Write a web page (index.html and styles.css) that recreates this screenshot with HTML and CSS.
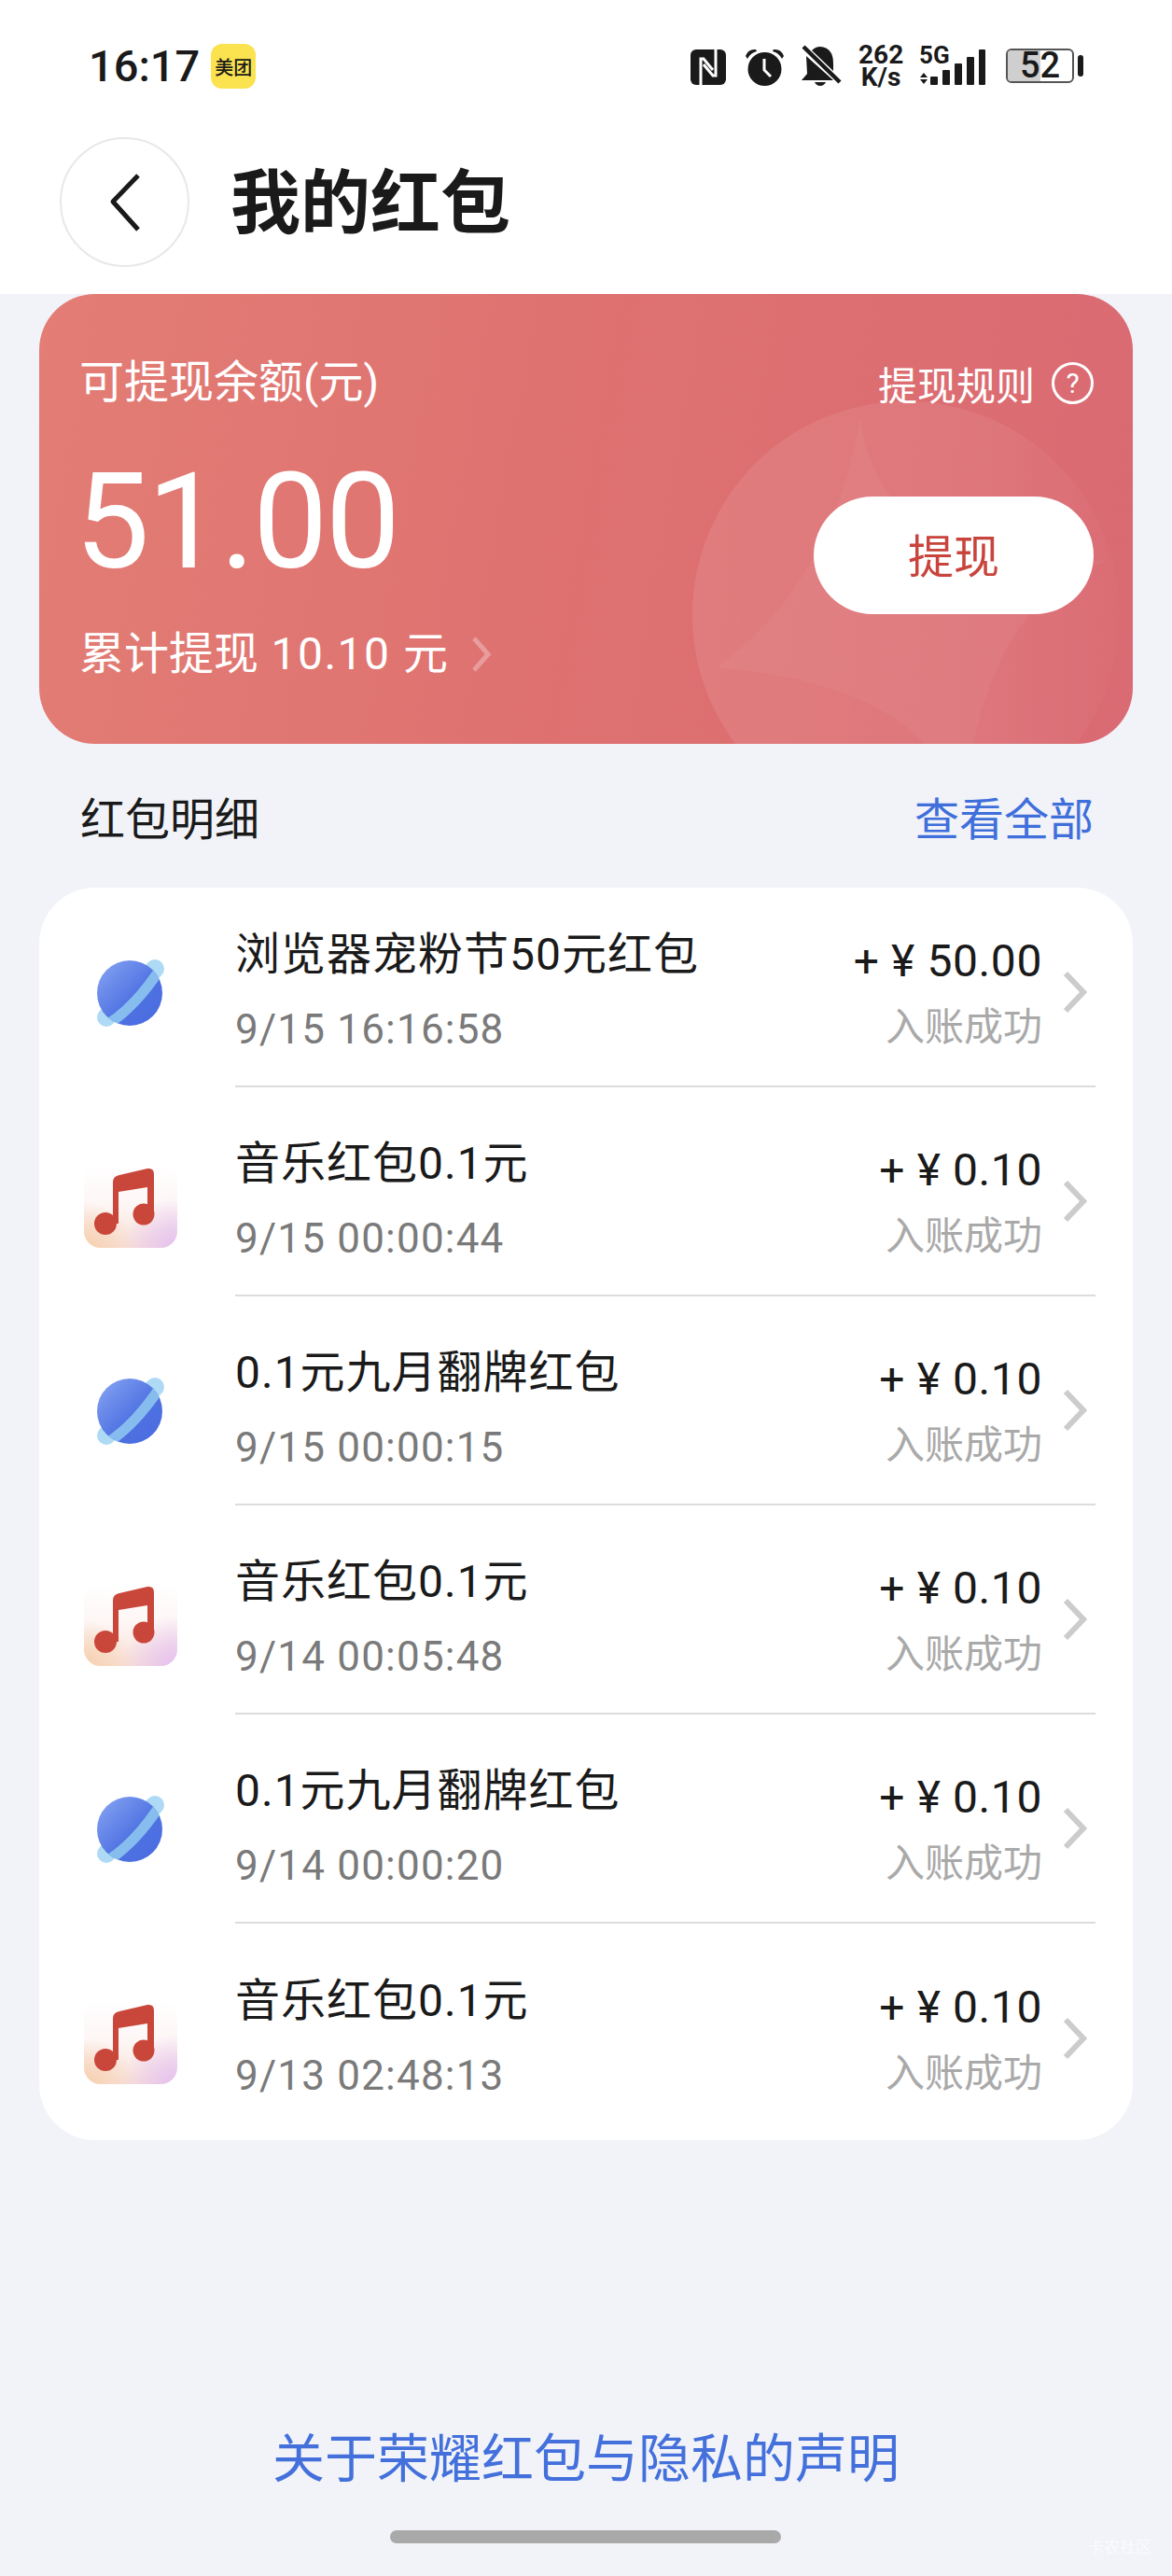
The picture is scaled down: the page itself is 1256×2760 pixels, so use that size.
FILE: index.html
```html
<!DOCTYPE html>
<html>
<head>
    <title>我的红包</title>
    <link rel="stylesheet" href="styles.css">
</head>
<body>
    <div class="page">
        <header class="top">
            <div class="status">
                <div class="status-left">
                    <span class="clock-text">16:17</span>
                    <span class="app-badge">美团</span>
                </div>
                <div class="status-right">
                    <svg class="ic-nfc" width="38" height="38" viewBox="0 0 38 38">
                        <rect width="38" height="38" rx="6" fill="#1a1a1a"/>
                        <path d="M11 38V10h3l10 12M27 0v28h-3L14 16" fill="none" stroke="#fff" stroke-width="3"/>
                    </svg>
                    <svg class="ic-alarm" width="43" height="41" viewBox="0 0 43 41">
                        <circle cx="21.500" cy="23" r="18" fill="#1a1a1a"/>
                        <path d="M1 9Q4 1 12 2L13 4Q7 5 3 12ZM42 9Q39 1 31 2L30 4Q36 5 40 12Z" fill="#1a1a1a"/>
                        <path d="M21 12v12l7 7" fill="none" stroke="#fff" stroke-width="3"/>
                    </svg>
                    <svg class="ic-bell" width="43" height="44" viewBox="0 0 43 44">
                        <path d="M5 12L34 38H0L6 31ZM11 6Q15 2 20 2Q34 3 34 20V28Z" fill="#1a1a1a"/>
                        <path d="M14 40H26Q24 44 20 44Q16 44 14 40Z" fill="#1a1a1a"/>
                        <path d="M2 2L41 40" stroke="#1a1a1a" stroke-width="4.500"/>
                    </svg>
                    <div class="speed">262<br>K/s</div>
                    <div class="net">
                        <span class="net-label">5G</span>
                        <svg class="net-bars" width="71" height="38" viewBox="0 0 71 38">
                            <path d="M1 30l4-5 4 5ZM1 32l4 5 4-5Z" fill="#1a1a1a"/>
                            <rect x="12" y="29" width="8" height="9" rx="1" fill="#1a1a1a"/>
                            <rect x="25" y="22" width="8" height="16" rx="1" fill="#1a1a1a"/>
                            <rect x="38" y="15" width="8" height="23" rx="1" fill="#1a1a1a"/>
                            <rect x="51" y="8" width="8" height="30" rx="1" fill="#1a1a1a"/>
                            <rect x="64" y="0" width="7" height="38" rx="1" fill="#1a1a1a"/>
                        </svg>
                    </div>
                    <div class="battery">
                        <div class="battery-body">
                            <span class="battery-fill"></span>
                            <span class="battery-num">52</span>
                        </div>
                        <span class="battery-nub"></span>
                    </div>
                </div>
            </div>
            <nav class="nav">
                <div class="back">
                    <svg width="34" height="64" viewBox="0 0 34 64">
                        <path d="M31 3L4 31L31 61" fill="none" stroke="#1a1a1a" stroke-width="5" stroke-linejoin="round"/>
                    </svg>
                </div>
                <h1>我的红包</h1>
            </nav>
        </header>

        <section class="balance">
            <svg class="balance-bg" width="1172" height="482" viewBox="0 0 1172 482">
                <defs>
                    <linearGradient id="disc-fade" x1="0" y1="0" x2="1" y2="0">
                        <stop offset="0" stop-color="#fff" stop-opacity="0.09"/>
                        <stop offset="0.7" stop-color="#fff" stop-opacity="0.07"/>
                        <stop offset="1" stop-color="#fff" stop-opacity="0.01"/>
                    </linearGradient>
                </defs>
                <circle cx="929" cy="344" r="229" fill="url(#disc-fade)"/>
                <path d="M880 132Q900 300 1146 285Q1010 330 990 560Q960 420 726 400Q850 310 880 132Z" fill="#fff" fill-opacity="0.04"/>
            </svg>
            <div class="balance-left">
                <div class="balance-label">可提现余额(元)</div>
                <div class="balance-amount">51.00</div>
                <div class="balance-total">
                    <span>累计提现<span class="total-num"> 10.10 </span>元</span>
                    <svg width="22" height="38" viewBox="0 0 22 38">
                        <path d="M3 2L18 19L3 36" fill="none" stroke="#fff" stroke-opacity="0.3" stroke-width="5"/>
                    </svg>
                </div>
            </div>
            <div class="balance-right">
                <div class="rules">
                    <span>提现规则</span>
                    <span class="rules-q">?</span>
                </div>
                <div class="withdraw">提现</div>
            </div>
        </section>

        <div class="section-head">
            <span class="section-title">红包明细</span>
            <span class="section-link">查看全部</span>
        </div>

        <section class="list">
            <div class="row">
                <div class="row-icon">
                    <svg width="72" height="72" viewBox="0 0 72 72"><use href="#planet"/></svg>
                </div>
                <div class="row-main">
                    <div class="row-text">
                        <div class="row-title">浏览器宠粉节50元红包</div>
                        <div class="row-time">9/15 16:16:58</div>
                    </div>
                    <div class="row-money">
                        <div class="row-amount">+ ¥ 50.00</div>
                        <div class="row-state">入账成功</div>
                    </div>
                    <svg class="row-arrow" width="26" height="46" viewBox="0 0 26 46"><path d="M3 3L22 23L3 43" fill="none" stroke="#ccc" stroke-width="6"/></svg>
                </div>
            </div>
            <div class="row">
                <div class="row-icon">
                    <svg class="note" width="100" height="90" viewBox="0 0 100 90"><use href="#music"/></svg>
                </div>
                <div class="row-main">
                    <div class="row-text">
                        <div class="row-title">音乐红包0.1元</div>
                        <div class="row-time">9/15 00:00:44</div>
                    </div>
                    <div class="row-money">
                        <div class="row-amount">+ ¥ 0.10</div>
                        <div class="row-state">入账成功</div>
                    </div>
                    <svg class="row-arrow" width="26" height="46" viewBox="0 0 26 46"><path d="M3 3L22 23L3 43" fill="none" stroke="#ccc" stroke-width="6"/></svg>
                </div>
            </div>
            <div class="row">
                <div class="row-icon">
                    <svg width="72" height="72" viewBox="0 0 72 72"><use href="#planet"/></svg>
                </div>
                <div class="row-main">
                    <div class="row-text">
                        <div class="row-title">0.1元九月翻牌红包</div>
                        <div class="row-time">9/15 00:00:15</div>
                    </div>
                    <div class="row-money">
                        <div class="row-amount">+ ¥ 0.10</div>
                        <div class="row-state">入账成功</div>
                    </div>
                    <svg class="row-arrow" width="26" height="46" viewBox="0 0 26 46"><path d="M3 3L22 23L3 43" fill="none" stroke="#ccc" stroke-width="6"/></svg>
                </div>
            </div>
            <div class="row">
                <div class="row-icon">
                    <svg class="note" width="100" height="90" viewBox="0 0 100 90"><use href="#music"/></svg>
                </div>
                <div class="row-main">
                    <div class="row-text">
                        <div class="row-title">音乐红包0.1元</div>
                        <div class="row-time">9/14 00:05:48</div>
                    </div>
                    <div class="row-money">
                        <div class="row-amount">+ ¥ 0.10</div>
                        <div class="row-state">入账成功</div>
                    </div>
                    <svg class="row-arrow" width="26" height="46" viewBox="0 0 26 46"><path d="M3 3L22 23L3 43" fill="none" stroke="#ccc" stroke-width="6"/></svg>
                </div>
            </div>
            <div class="row">
                <div class="row-icon">
                    <svg width="72" height="72" viewBox="0 0 72 72"><use href="#planet"/></svg>
                </div>
                <div class="row-main">
                    <div class="row-text">
                        <div class="row-title">0.1元九月翻牌红包</div>
                        <div class="row-time">9/14 00:00:20</div>
                    </div>
                    <div class="row-money">
                        <div class="row-amount">+ ¥ 0.10</div>
                        <div class="row-state">入账成功</div>
                    </div>
                    <svg class="row-arrow" width="26" height="46" viewBox="0 0 26 46"><path d="M3 3L22 23L3 43" fill="none" stroke="#ccc" stroke-width="6"/></svg>
                </div>
            </div>
            <div class="row">
                <div class="row-icon">
                    <svg class="note" width="100" height="90" viewBox="0 0 100 90"><use href="#music"/></svg>
                </div>
                <div class="row-main">
                    <div class="row-text">
                        <div class="row-title">音乐红包0.1元</div>
                        <div class="row-time">9/13 02:48:13</div>
                    </div>
                    <div class="row-money">
                        <div class="row-amount">+ ¥ 0.10</div>
                        <div class="row-state">入账成功</div>
                    </div>
                    <svg class="row-arrow" width="26" height="46" viewBox="0 0 26 46"><path d="M3 3L22 23L3 43" fill="none" stroke="#ccc" stroke-width="6"/></svg>
                </div>
            </div>
        </section>

        <div class="privacy">关于荣耀红包与隐私的声明</div>
        <div class="home-bar"></div>
        <div class="watermark">卡农社区</div>
    </div>

    <!-- shared row icons -->
    <svg class="defs" width="0" height="0">
        <defs>
            <linearGradient id="planet-fill" x1="0.1" y1="0.1" x2="0.9" y2="0.9">
                <stop offset="0" stop-color="#7f9df0"/>
                <stop offset="0.6" stop-color="#4f72e2"/>
                <stop offset="1" stop-color="#4a6ce0"/>
            </linearGradient>
            <linearGradient id="music-v" x1="0" y1="0" x2="0" y2="1">
                <stop offset="0" stop-color="#fff"/>
                <stop offset="0.5" stop-color="#fdf6f5"/>
                <stop offset="1" stop-color="#f8dfd6"/>
            </linearGradient>
            <radialGradient id="music-l" cx="0" cy="1" r="0.55">
                <stop offset="0" stop-color="#f6d0ae"/>
                <stop offset="1" stop-color="#f6d0ae" stop-opacity="0"/>
            </radialGradient>
            <radialGradient id="music-r" cx="1" cy="1" r="0.6">
                <stop offset="0" stop-color="#e4bff2"/>
                <stop offset="1" stop-color="#e4bff2" stop-opacity="0"/>
            </radialGradient>
            <clipPath id="planet-clip"><circle cx="35" cy="36" r="35"/></clipPath>
            <g id="planet">
                <path d="M10 62L62 10" stroke="#aedaf5" stroke-width="20" stroke-linecap="round"/>
                <circle cx="35" cy="36" r="35" fill="url(#planet-fill)"/>
                <path d="M0 76Q40 56 74 0" fill="none" stroke="#86bdee" stroke-width="11" clip-path="url(#planet-clip)"/>
            </g>
            <g id="music">
                <rect width="100" height="90" rx="18" fill="url(#music-v)"/>
                <rect width="100" height="90" rx="18" fill="url(#music-l)"/>
                <rect width="100" height="90" rx="18" fill="url(#music-r)"/>
                <path d="M31 20Q31 13 38 12L68 5Q75 4 75 11V54H68V25L37 30V64H31Z" fill="#c9463a"/>
                <circle cx="23" cy="64" r="12" fill="#c9463a"/>
                <circle cx="64" cy="54" r="11.500" fill="#c9463a"/>
            </g>
        </defs>
    </svg>
</body>
</html>
```

FILE: styles.css
```css
* {
    box-sizing: border-box;
}
html, body {
    margin: 0;
    padding: 0;
}
body {
    font-family: Roboto, "Noto Sans CJK SC", sans-serif;
    background-color: #f1f3f8;
    color: #1a1a1a;
}
.defs {
    position: absolute;
}
.page {
    position: relative;
    height: 2760px;
    overflow: hidden;
}

/* status bar + title */
.top {
    height: 315px;
    background-color: #fff;
    padding-top: 47px;
}
.status {
    display: flex;
    justify-content: space-between;
    height: 48px;
    padding: 0 95px 0 95px;
}
.status-left {
    display: flex;
    align-items: center;
    gap: 12px;
}
.clock-text {
    font-size: 47px;
    font-weight: 500;
    line-height: 48px;
}
.app-badge {
    display: flex;
    align-items: center;
    justify-content: center;
    width: 48px;
    height: 48px;
    border-radius: 12px;
    background-color: #fbe24f;
    font-size: 20px;
    font-weight: 500;
}
.status-right {
    display: flex;
    align-items: flex-start;
}
.ic-nfc {
    margin: 6px 20px 0 0;
}
.ic-alarm {
    margin: 4px 18px 0 0;
}
.ic-bell {
    margin: 1px 18px 0 0;
}
.speed {
    width: 48px;
    margin-right: 17px;
    font-size: 28px;
    font-weight: 700;
    line-height: 24px;
    text-align: center;
}
.net {
    position: relative;
    width: 71px;
    height: 44px;
    margin-right: 22px;
}
.net-label {
    position: absolute;
    left: 0;
    top: 0;
    font-size: 26px;
    font-weight: 700;
    line-height: 24px;
}
.net-bars {
    position: absolute;
    left: 0;
    top: 6px;
}
.battery {
    display: flex;
    align-items: center;
    gap: 4px;
    margin-top: 5px;
}
.battery-body {
    position: relative;
    display: flex;
    align-items: center;
    justify-content: center;
    width: 73px;
    height: 37px;
    border: 2px solid #555;
    border-radius: 6px;
}
.battery-fill {
    position: absolute;
    left: 0;
    top: 0;
    bottom: 0;
    width: 50%;
    border-radius: 4px 0 0 4px;
    background-color: #cfcfcf;
}
.battery-num {
    position: relative;
    font-size: 38px;
    font-weight: 500;
    line-height: 33px;
}
.battery-nub {
    width: 6px;
    height: 23px;
    border-radius: 3px;
    background-color: #1a1a1a;
}
.nav {
    display: flex;
    align-items: center;
    gap: 44px;
    margin-top: 52px;
    padding-left: 64px;
}
.back {
    display: flex;
    align-items: center;
    justify-content: center;
    width: 139px;
    height: 139px;
    border: 2px solid #e8e8e8;
    border-radius: 50%;
}
.nav h1 {
    margin: 0;
    padding-top: 3px;
    font-size: 75px;
    font-weight: 700;
    line-height: 90px;
}

/* balance card */
.balance {
    position: relative;
    display: flex;
    justify-content: space-between;
    height: 482px;
    margin: 0 42px;
    padding: 60px 42px 0 43px;
    border-radius: 60px;
    overflow: hidden;
    color: #fff;
    background: linear-gradient(100deg, #e37d75 0%, #de7170 50%, #da6a73 100%);
}
.balance-bg {
    position: absolute;
    left: 0;
    top: 0;
}
.balance-left, .balance-right {
    position: relative;
}
.balance-label {
    font-size: 48px;
    line-height: 70px;
}
.balance-amount {
    margin-top: 34px;
    margin-left: -5px;
    font-size: 143px;
    line-height: 160px;
    letter-spacing: -2.500px;
}
.balance-total {
    display: flex;
    align-items: center;
    gap: 25px;
    margin-top: 27px;
    font-size: 48px;
    line-height: 70px;
}
.total-num {
    letter-spacing: 1.500px;
}
.balance-right {
    display: flex;
    flex-direction: column;
    align-items: flex-end;
}
.rules {
    display: flex;
    align-items: center;
    gap: 18px;
    height: 70px;
    font-size: 42px;
}
.rules-q {
    display: flex;
    align-items: center;
    justify-content: center;
    width: 45px;
    height: 45px;
    border: 3px solid #fff;
    border-radius: 50%;
    font-size: 30px;
}
.withdraw {
    display: flex;
    align-items: center;
    justify-content: center;
    width: 300px;
    height: 126px;
    margin-top: 87px;
    padding-bottom: 6px;
    border-radius: 63px;
    background-color: #fff;
    color: #c8443c;
    font-size: 49px;
}

/* list */
.section-head {
    display: flex;
    align-items: center;
    justify-content: space-between;
    height: 154px;
    padding: 0 84px 0 86px;
    font-size: 48px;
}
.section-link {
    color: #3f6fdb;
}
.list {
    display: flow-root;
    height: 1342px;
    margin: 0 42px;
    border-radius: 60px;
    background-color: #fff;
}
.row {
    display: flex;
    height: 224px;
    padding-left: 48px;
}
.row:first-child {
    margin-top: -10px;
}
.row-icon {
    display: flex;
    align-items: center;
    justify-content: center;
    width: 100px;
    padding-top: 22px;
}
.note {
    margin-top: 8px;
}
.row-main {
    display: flex;
    flex: 1;
    align-items: center;
    margin-left: 62px;
    margin-right: 40px;
    padding-top: 22px;
    padding-right: 9px;
    border-bottom: 2px solid #dcdcdc;
}
.row:last-child .row-main {
    border-bottom: none;
}
.row-text {
    flex: 1;
}
.row-title {
    font-size: 48px;
    line-height: 60px;
    letter-spacing: 1px;
}
.row-time {
    margin-top: 20px;
    font-size: 44px;
    line-height: 60px;
    letter-spacing: 1.200px;
    color: #7a7a7a;
}
.row-money {
    margin-top: 5px;
    text-align: right;
}
.row-amount {
    font-size: 48px;
    line-height: 60px;
    letter-spacing: 0.600px;
}
.row-state {
    margin-top: 11px;
    font-size: 42px;
    line-height: 60px;
    color: #a9a9a9;
}
.row-arrow {
    margin-left: 22px;
}

/* footer */
.privacy {
    margin-top: 302px;
    font-size: 56px;
    line-height: 80px;
    text-align: center;
    color: #4470dc;
}
.home-bar {
    width: 419px;
    height: 14px;
    margin: 36px 0 0 418px;
    border-radius: 7px;
    background-color: #a9a9a9;
}
.watermark {
    position: absolute;
    right: 22px;
    bottom: 21px;
    font-size: 17px;
    line-height: 20px;
    color: rgba(255, 255, 255, 0.7);
}
```
